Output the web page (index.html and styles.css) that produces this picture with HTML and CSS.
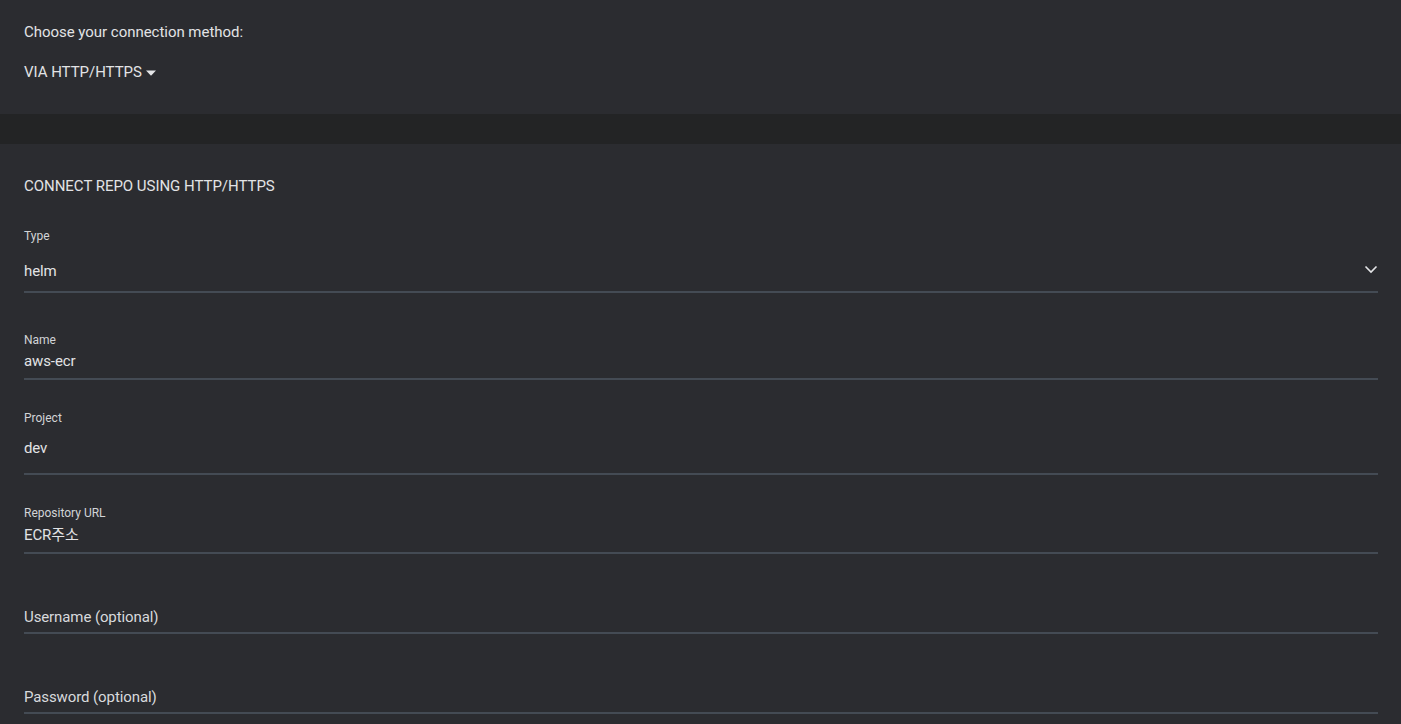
FILE: index.html
```html
<!DOCTYPE html>
<html>
<head>
<meta charset="utf-8">
<link rel="stylesheet" href="styles.css">
</head>
<body>
<section class="method">
  <div class="line">Choose your connection method:</div>
  <div class="line method-pick">VIA HTTP/HTTPS
    <svg class="caret" width="10" height="6" viewBox="0 0 10 6"><path d="M0 0.5 H10 L5 5.8 Z" fill="#e4e5e7"/></svg>
  </div>
</section>
<div class="band"></div>
<section class="form">
  <div class="line title">CONNECT REPO USING HTTP/HTTPS</div>
  <div class="field f-type">
    <div class="label">Type</div>
    <div class="value row">helm
      <svg class="chev" width="14" height="9" viewBox="0 0 14 9"><path d="M1.5 1.5 L7 7 L12.5 1.5" fill="none" stroke="#e4e5e7" stroke-width="1.6"/></svg>
    </div>
  </div>
  <div class="field f-name">
    <div class="label">Name</div>
    <div class="value">aws-ecr</div>
  </div>
  <div class="field f-project">
    <div class="label">Project</div>
    <div class="value">dev</div>
  </div>
  <div class="field f-url">
    <div class="label">Repository URL</div>
    <div class="value">ECR주소</div>
  </div>
  <div class="field f-user">
    <div class="value placeholder">Username (optional)</div>
  </div>
  <div class="field f-pass">
    <div class="value placeholder">Password (optional)</div>
  </div>
</section>
</body>
</html>
```
FILE: styles.css
```css
html, body {
  margin: 0;
  padding: 0;
  background: #2b2c30;
  font-family: Roboto, "Noto Sans CJK KR", sans-serif;
  color: #e2e3e5;
  height: 724px;
  overflow: hidden;
}
.line {
  font-size: 15px;
  line-height: 18px;
  letter-spacing: -0.03px;
}
.method {
  padding: 23px 23px 33px 24px;
}
.method-pick {
  margin-top: 22px;
  display: flex;
  align-items: center;
  gap: 4px;
}
.caret {
  margin-top: 1px;
}
.band {
  height: 30px;
  background: #232425;
}
.form {
  padding: 33px 23px 0 24px;
}
.field {
  border-bottom: 2px solid #444b54;
}
.label {
  font-size: 12px;
  line-height: 14px;
  color: #d2d4d7;
}
.value {
  font-size: 15px;
  line-height: 18px;
  letter-spacing: -0.1px;
  color: #e2e3e5;
}
.row {
  display: flex;
  justify-content: space-between;
  align-items: center;
}
.chev {
  margin-top: -3px;
}
.placeholder {
  color: #d8dadd;
}
.f-type { margin-top: 34px; padding-bottom: 11px; }
.f-type .value { margin-top: 19px; }
.f-name { margin-top: 40px; padding-bottom: 8px; }
.f-name .value { margin-top: 5px; }
.f-project { margin-top: 31px; padding-bottom: 16px; }
.f-project .value { margin-top: 14px; }
.f-url { margin-top: 31px; padding-bottom: 8px; }
.f-url .value { margin-top: 6px; }
.f-user { margin-top: 54px; padding-bottom: 6px; }
.f-pass { margin-top: 54px; padding-bottom: 6px; }
```
